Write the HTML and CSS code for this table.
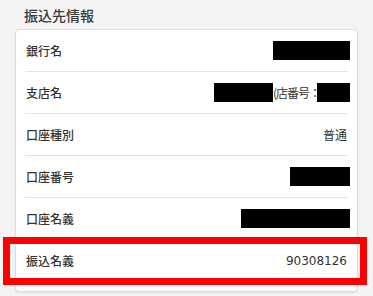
FILE: index.html
```html
<!DOCTYPE html>
<html lang="ja">
<head>
<meta charset="utf-8">
<link rel="stylesheet" href="styles.css">
</head>
<body>
<div class="page">
  <h2 class="title">振込先情報</h2>
  <div class="card">
    <div class="row"><span class="label">銀行名</span><span class="value"><span class="mask mask-bank"></span></span></div>
    <div class="row"><span class="label">支店名</span><span class="value"><span class="mask mask-branch"></span><span class="branch-no">(店番号：</span><span class="mask mask-no"></span></span></div>
    <div class="row"><span class="label">口座種別</span><span class="value text">普通</span></div>
    <div class="row"><span class="label">口座番号</span><span class="value"><span class="mask mask-acct"></span></span></div>
    <div class="row"><span class="label">口座名義</span><span class="value"><span class="mask mask-name"></span></span></div>
    <div class="row highlight"><span class="label">振込名義</span><span class="value text">90308126</span><span class="red-frame"></span></div>
  </div>
</div>
</body>
</html>
```
FILE: styles.css
```css
html, body {
  margin: 0;
  padding: 0;
  background: #f4f4f4;
}
body {
  font-family: "DejaVu Sans", "Noto Sans CJK JP", sans-serif;
  color: #333;
  width: 373px;
  height: 296px;
  overflow: hidden;
}
.page {
  padding: 0 15px;
}
.title {
  margin: 0;
  height: 29px;
  padding-left: 9px;
  font-family: "Noto Sans CJK JP", sans-serif;
  font-size: 14px;
  font-weight: 500;
  line-height: 30px;
  color: #3a3a3a;
}
.card {
  background: #fff;
  border: 1px solid #dcdcdc;
  border-radius: 4px;
  box-shadow: 0 1px 2px rgba(0, 0, 0, 0.08);
  padding: 0 9px 10px 9px;
  box-sizing: border-box;
  width: 343px;
}
.row {
  position: relative;
  display: flex;
  justify-content: space-between;
  align-items: center;
  height: 41px;
  border-bottom: 1px solid #e2e2e2;
  padding: 0 1px;
}
.row.highlight {
  border-bottom: none;
}
.label {
  font-family: "Noto Sans CJK JP", sans-serif;
  font-size: 12px;
  font-weight: 500;
  color: #333;
}
.value {
  display: flex;
  align-items: center;
  font-size: 12px;
  color: #333;
}
.mask {
  display: inline-block;
  height: 19px;
  background: #000;
  margin-right: -3px;
}
.mask-bank { width: 77px; }
.mask-branch { width: 59px; margin-right: 0; }
.mask-no { width: 33px; }
.mask-acct { width: 60px; }
.mask-name { width: 109px; }
.branch-no {
  font-family: "Noto Sans CJK JP", sans-serif;
  font-size: 12px;
  letter-spacing: -1px;
  white-space: nowrap;
  margin-right: -3px;
}
.red-frame {
  position: absolute;
  left: -22px;
  top: -3px;
  right: -19px;
  bottom: -4px;
  border: 7px solid #ff0000;
}
```
